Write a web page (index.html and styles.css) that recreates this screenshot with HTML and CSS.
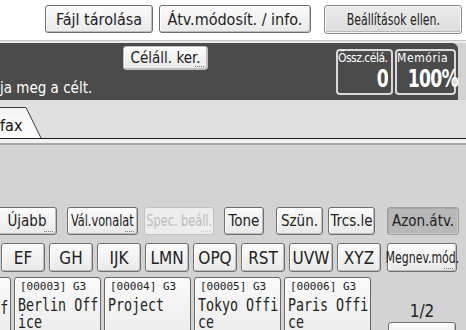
FILE: index.html
```html
<!DOCTYPE html>
<html lang="hu">
  <head>
    <meta charset="UTF-8" />
    <title>Fax</title>
    <link rel="stylesheet" href="styles.css">
  </head>
  <body>
    <header class="topbar">
      <button class="btn top-btn store">Fájl tárolása</button>
      <button class="btn top-btn info">Átv.módosít. / info.</button>
      <button class="btn top-btn check"><span class="squeeze">Beállítások ellen.</span></button>
    </header>
    <div class="rule"></div>

    <section class="status">
      <div class="status-left">
        <button class="btn dest more">Céláll. ker.</button>
        <p class="msg">ja meg a célt.</p>
      </div>
      <div class="counters">
        <div class="counter total">
          <span class="c-label">Össz.célá.</span>
          <span class="c-value">0</span>
        </div>
        <div class="counter mem">
          <span class="c-label">Memória</span>
          <span class="c-value">100%</span>
        </div>
      </div>
    </section>

    <nav class="tabs">
      <svg class="tab" width="46" height="38" viewBox="0 0 46 38">
        <defs>
          <linearGradient id="tabfill" x1="0" y1="0" x2="0" y2="1">
            <stop offset="0" stop-color="#f4f4f4" />
            <stop offset="1" stop-color="#ffffff" />
          </linearGradient>
        </defs>
        <path d="M-2 38 L-2 7.5 L26 7.5 L41 38" fill="url(#tabfill)" stroke="#3c3c3c" stroke-width="1" />
        <text x="0" y="31" class="tab-text">fax</text>
      </svg>
    </nav>
    <div class="divider"></div>

    <main class="panel">
      <div class="row keys">
        <button class="btn k-new more">Újabb</button>
        <button class="btn k-line more"><span class="narrow">Vál.vonalat</span></button>
        <button class="btn k-spec more off"><span class="narrow">Spec. beáll.</span></button>
        <button class="btn k-tone">Tone</button>
        <button class="btn k-pause">Szün.</button>
        <button class="btn k-hook">Trcs.le</button>
        <button class="btn k-id on">Azon.átv.</button>
      </div>

      <div class="row letters">
        <button class="btn letter first">EF</button>
        <button class="btn letter">GH</button>
        <button class="btn letter">IJK</button>
        <button class="btn letter">LMN</button>
        <button class="btn letter">OPQ</button>
        <button class="btn letter">RST</button>
        <button class="btn letter">UVW</button>
        <button class="btn letter">XYZ</button>
        <button class="btn rename more"><span class="squeeze">Megnev.mód.</span></button>
      </div>

      <div class="row cards">
        <div class="card cut">
          <span class="c-name">London Off</span>
        </div>
        <div class="card">
          <span class="c-head">[00003] G3</span>
          <span class="c-name">Berlin Office</span>
        </div>
        <div class="card">
          <span class="c-head">[00004] G3</span>
          <span class="c-name">Project</span>
        </div>
        <div class="card">
          <span class="c-head">[00005] G3</span>
          <span class="c-name">Tokyo Office</span>
        </div>
        <div class="card">
          <span class="c-head">[00006] G3</span>
          <span class="c-name">Paris Office</span>
        </div>
        <div class="pager">
          <span class="page">1/2</span>
          <button class="btn page-btn"></button>
        </div>
      </div>
    </main>
  </body>
</html>
```

FILE: styles.css
```css
body {
  margin: 0;
  width: 466px;
  height: 330px;
  overflow: hidden;
  background: #d3d3d3;
  font-family: "DejaVu Sans Condensed", "DejaVu Sans", sans-serif;
  color: #222;
}
.btn {
  position: relative;
  display: flex;
  align-items: center;
  justify-content: center;
  box-sizing: border-box;
  padding: 0;
  font-family: inherit;
  color: #222;
  background: linear-gradient(#fbfbfb, #e9e9e9);
  border: 1px solid #6f6f6f;
  border-radius: 3px;
  box-shadow: inset 1px 1px 0 #ffffff, inset -1px -1px 0 #bdbdbd;
  white-space: nowrap;
}
.more::after {
  content: "";
  position: absolute;
  right: 3px;
  bottom: 2px;
  width: 9px;
  border-bottom: 1px dotted #777;
}
.squeeze {
  display: inline-block;
  transform: scaleX(0.76);
}
.narrow {
  display: inline-block;
  transform: scaleX(0.84);
}

/* top bar */
.topbar {
  display: flex;
  height: 40px;
  box-sizing: border-box;
  padding: 5px 0 0 45px;
  background: #ffffff;
}
.top-btn {
  height: 28px;
  font-size: 16px;
}
.store {
  width: 108px;
}
.info {
  width: 152px;
  margin-left: 6px;
}
.check {
  width: 138px;
  height: 29px;
  margin-left: 13px;
  font-size: 16px;
  background: linear-gradient(#ececec, #dcdcdc);
  border: 1px solid #8a8a8a;
  box-shadow: inset 0 0 0 1px #f6f6f6, inset -1px -2px 0 #b9b9b9;
}
.rule {
  height: 2px;
  border-top: 1px solid #c4c4c4;
  background: #ececec;
}

/* status band */
.status {
  display: flex;
  justify-content: space-between;
  height: 57px;
  margin-right: 8px;
  background: #4b4b4b;
  border-top-right-radius: 6px;
}
.status-left {
  display: flex;
  flex-direction: column;
  align-items: flex-start;
}
.dest {
  width: 85px;
  height: 24px;
  margin: 3px 0 0 123px;
  font-size: 15px;
  border-color: #bdbdbd;
}
.msg {
  margin: auto 0 3px 0;
  font-size: 15px;
  line-height: 18px;
  color: #ffffff;
}
.counters {
  display: flex;
  gap: 2px;
  margin: 6px 2px 0 0;
}
.counter {
  display: flex;
  flex-direction: column;
  box-sizing: border-box;
  height: 46px;
  padding: 0 3px 0 0;
  border: 2px solid #dadada;
  border-radius: 4px;
  color: #ffffff;
}
.total {
  width: 57px;
}
.mem {
  width: 61px;
}
.c-label {
  font-size: 12px;
  line-height: 15px;
  white-space: nowrap;
}
.total .c-label {
  letter-spacing: -0.5px;
}
.mem .c-label {
  letter-spacing: 0.6px;
}
.c-value {
  margin-top: 1px;
  text-align: right;
  font-size: 24px;
  line-height: 24px;
  font-weight: bold;
  letter-spacing: -1px;
  transform: scaleX(0.8);
  transform-origin: right top;
}

/* tabs */
.tabs {
  height: 38px;
  background: #e0e0e0;
}
.tab {
  display: block;
}
.tab-text {
  font-family: "DejaVu Sans Condensed", "DejaVu Sans", sans-serif;
  font-size: 16px;
  fill: #111;
}
.divider {
  height: 4px;
  border-top: 1px solid #1c1c1c;
  border-bottom: 2px solid #a7a7a7;
  background: #f2f2f2;
}

/* main panel */
.panel {
  padding-top: 62px;
}
.row {
  display: flex;
}
.keys {
  height: 28px;
  margin-bottom: 8px;
}
.keys .btn {
  height: 28px;
  font-size: 15px;
}
.k-new {
  width: 60px;
  margin-left: -3px;
}
.k-line {
  width: 71px;
  margin-left: 10px;
}
.k-spec {
  width: 70px;
  margin-left: 6px;
}
.k-tone {
  width: 40px;
  margin-left: 10px;
}
.k-pause {
  width: 47px;
  margin-left: 12px;
}
.k-hook {
  width: 47px;
  margin-left: 5px;
}
.k-id {
  width: 72px;
  margin-left: 12px;
}
.off {
  color: #bcbcbc;
  background: #ededed;
  border-color: #c2c2c2;
  box-shadow: none;
}
.off::after {
  border-color: #c6c6c6;
}
.on {
  background: #b8b8b8;
  border-color: #a0a0a0;
  box-shadow: inset 1px 1px 0 #a8a8a8, inset -1px -1px 0 #cacaca;
}
.letters {
  height: 29px;
  gap: 4px;
  margin-bottom: 5px;
}
.letter {
  width: 44px;
  height: 29px;
  font-size: 17px;
}
.first {
  margin-left: 1px;
}
.rename {
  width: 70px;
  height: 29px;
  margin-left: 2px;
  font-size: 16px;
}

/* destination cards */
.cards {
  gap: 3px;
  margin-left: -76px;
}
.card {
  display: flex;
  flex-direction: column;
  box-sizing: border-box;
  width: 87px;
  height: 60px;
  padding: 3px 0 0 3px;
  flex-shrink: 0;
  overflow: hidden;
  background: linear-gradient(#fafafa, #ececec);
  border: 1px solid #666;
  border-radius: 3px;
  box-shadow: inset 1px 1px 0 #fff;
}
.cut {
  padding-top: 18px;
}
.c-head {
  font-family: "DejaVu Sans Mono", monospace;
  font-size: 11px;
  line-height: 12px;
  margin-left: 2px;
}
.c-name {
  width: 10ch;
  font-family: "DejaVu Sans Mono", monospace;
  font-size: 18px;
  line-height: 17px;
  margin-top: 3px;
  word-break: break-all;
  transform: scaleX(0.74);
  transform-origin: left top;
}
.pager {
  display: flex;
  flex-direction: column;
  align-items: center;
  width: 68px;
  margin-left: 14px;
  flex-shrink: 0;
}
.page {
  margin-top: 24px;
  font-size: 17px;
  line-height: 20px;
}
.page-btn {
  width: 68px;
  height: 20px;
  margin-top: 1px;
}
```
